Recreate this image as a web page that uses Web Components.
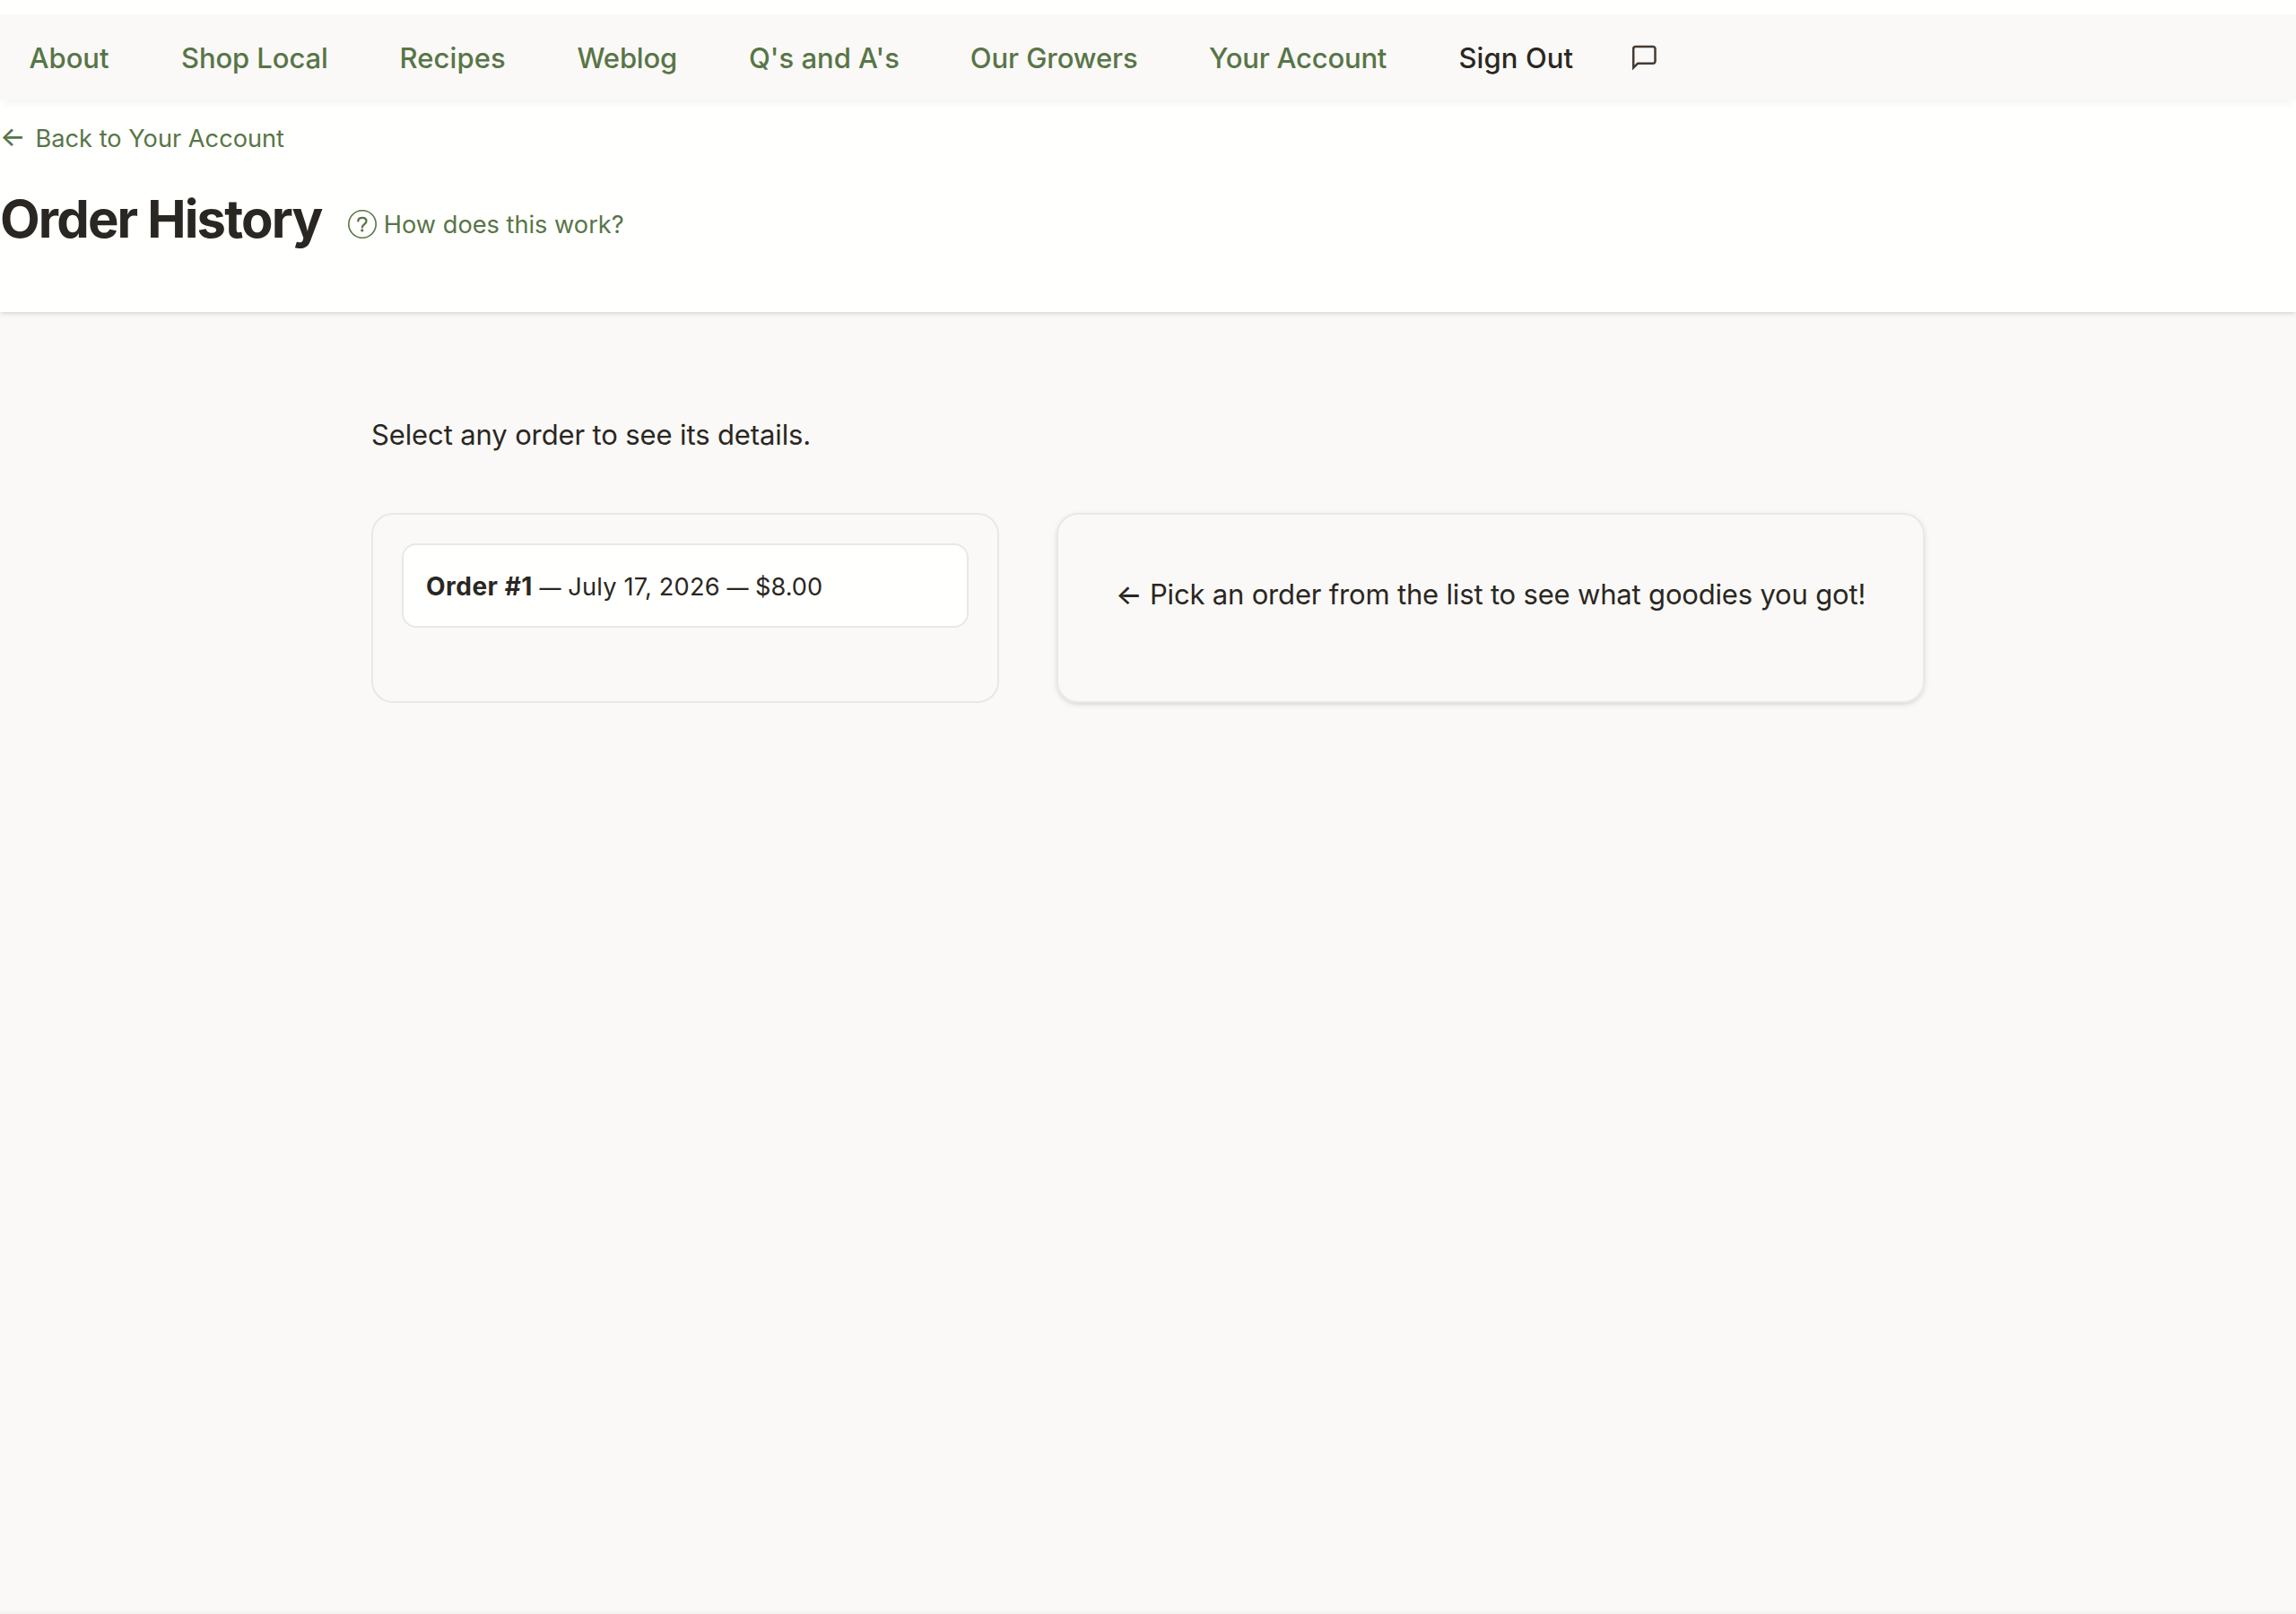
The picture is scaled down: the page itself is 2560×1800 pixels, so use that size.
<!DOCTYPE html>
<html lang="en">
<head>
<meta charset="utf-8">
<title>Order History</title>
<style>
:root{
    --green:#587547;
    --ink:#2a2722;
    --stone:#faf9f7;
    --line:#e9e8e2;
    --card-shadow:0 2px 6px rgba(0,0,0,0.1), 0 2px 4px -2px rgba(0,0,0,0.1);
}
body{
    margin:0;
    height:1800px;
    overflow:hidden;
    display:flex;
    flex-direction:column;
    background:#fffffe;
    color:var(--ink);
    font-family:Inter, "Noto Sans", sans-serif;
}
</style>
</head>
<body>

<market-nav>
    <nav-item style="width:89.5px">About</nav-item>
    <nav-item style="width:163.5px;letter-spacing:-0.1px">Shop Local</nav-item>
    <nav-item style="width:118px;letter-spacing:0.1px">Recipes</nav-item>
    <nav-item style="width:111.5px;letter-spacing:-0.18px">Weblog</nav-item>
    <nav-item style="width:166.8px">Q's and A's</nav-item>
    <nav-item style="width:186.2px;letter-spacing:-0.06px">Our Growers</nav-item>
    <nav-item style="width:198.5px;letter-spacing:-0.2px">Your Account</nav-item>
    <nav-item plain style="width:126px;letter-spacing:0.1px">Sign Out</nav-item>
    <chat-icon slot="icon"></chat-icon>
</market-nav>

<page-header>
    <span slot="back">Back to Your Account</span>
    <span slot="title">Order History</span>
    <help-link slot="help">How does this work?</help-link>
</page-header>

<order-browser>
    <span slot="intro">Select any order to see its details.</span>
    <order-row slot="list" number="1" date="July 17, 2026" total="$8.00"></order-row>
    <order-detail slot="detail">Pick an order from the list to see what goodies you got!</order-detail>
</order-browser>

<script>
const define = (name, html, setup) => {
    customElements.define(name, class extends HTMLElement {
        constructor(){
            super();
            this.attachShadow({mode:'open'});
            this.shadowRoot.innerHTML = html;
        }
        connectedCallback(){
            if(setup) setup(this, this.shadowRoot);
        }
    });
};

/*---- top navigation ----*/

define('market-nav', `
<style>
:host{
    display:block;
    margin-top:16px;
    position:relative;
    z-index:1;
    background:var(--stone);
    box-shadow:0 8px 8px -4px rgba(0,0,0,0.04);
}
nav{
    display:flex;
    align-items:center;
    gap:80px;
    height:96px;
    padding-left:32.5px;
}
.icon{
    display:flex;
    margin-left:-15px;
}
</style>
<nav><slot></slot><div class="icon"><slot name="icon"></slot></div></nav>`);

define('nav-item', `
<style>
:host{
    display:block;
    flex:none;
    padding-top:1px;
    font-size:31px;
    font-weight:500;
    line-height:48px;
    white-space:nowrap;
    color:var(--green);
}
:host([plain]){
    color:var(--ink);
}
a{ color:inherit; }
</style>
<a><slot></slot></a>`);

define('chat-icon', `
<style>
:host{ display:block; width:32px; height:32px; }
svg{ display:block; }
</style>
<svg width="32" height="32" viewBox="0 0 32 32" fill="none" stroke="#453b33" stroke-width="2.5" stroke-miterlimit="10">
    <path d="M4.2 27.6V6.4a2.5 2.5 0 0 1 2.5-2.5H26a2.5 2.5 0 0 1 2.5 2.5v13.9a2.5 2.5 0 0 1-2.5 2.5H9z"/>
</svg>`);

/*---- page heading ----*/

define('page-header', `
<style>
:host{
    display:block;
    flex:none;
    box-sizing:border-box;
    height:236px;
    padding-top:23px;
    background:#fffffd;
    position:relative;
    box-shadow:var(--card-shadow);
}
.back{
    display:flex;
    gap:12.5px;
    font-size:27.2px;
    line-height:40px;
    color:var(--green);
}
.arrow{
    width:27px;
    font-size:30px;
    font-weight:500;
    line-height:34px;
}
.heading{
    display:flex;
    align-items:flex-start;
    gap:29.5px;
    margin-top:33px;
}
h1{
    margin:0;
    font-size:58px;
    font-weight:700;
    line-height:73px;
    letter-spacing:-1.85px;
}
.help{ margin-top:22px; }
</style>
<div class="back"><span class="arrow">←</span><slot name="back"></slot></div>
<div class="heading">
    <h1><slot name="title"></slot></h1>
    <div class="help"><slot name="help"></slot></div>
</div>`);

define('help-link', `
<style>
:host{
    display:flex;
    align-items:center;
    gap:7.8px;
    font-size:27.2px;
    line-height:40px;
    color:var(--green);
}
span{ padding-top:1px; margin-bottom:-1px; }
</style>
<svg width="32" height="32" viewBox="0 0 32 32" fill="none" stroke="currentColor">
    <circle cx="16" cy="16" r="15.2" stroke-width="1.6"/>
    <path d="M11.3 12.6C11.3 10.2 13.2 8.9 15.9 8.9c2.7 0 4.6 1.5 4.6 3.7 0 1.8-1 2.7-2.4 3.6-1.5 1-2.2 1.8-2.2 3.4" stroke-width="2.3" stroke-linecap="round"/>
    <circle cx="15.8" cy="22.9" r="1.6" fill="currentColor" stroke="none"/>
</svg>
<span><slot></slot></span>`);

/*---- order list and detail ----*/

define('order-browser', `
<style>
:host{
    display:block;
    flex:1;
    padding-top:113px;
    background:var(--stone);
    box-shadow:inset 0 -6px 5px -5px rgba(0,0,0,0.05);
}
main{
    width:1732px;
    margin:0 auto;
}
p{
    margin:0 0 63px;
    font-size:31px;
    line-height:48px;
    letter-spacing:-0.125px;
}
.columns{
    display:grid;
    grid-template-columns:700px 968px;
    gap:64px;
    height:212px;
}
.list{
    border:2px solid var(--line);
    border-radius:24px;
    padding:32px;
}
</style>
<main>
    <p><slot name="intro"></slot></p>
    <div class="columns">
        <div class="list"><slot name="list"></slot></div>
        <slot name="detail"></slot>
    </div>
</main>`);

define('order-row', `
<style>
:host{
    display:block;
    box-sizing:border-box;
    height:94px;
    padding:26px 24px 0 25px;
    border:2px solid var(--line);
    border-radius:16px;
    background:#fffffe;
    font-size:27.2px;
    line-height:40px;
    white-space:nowrap;
}
b{
    font-size:28px;
    font-weight:700;
    letter-spacing:0.5px;
}
.dash{ font-size:24px; font-weight:500; }
.date{ letter-spacing:0.2px; }
</style>
<b></b> <span class="dash">—</span> <span class="date"></span> <span class="dash">—</span> <span class="total"></span>`,
(el, root) => {
    root.querySelector('b').textContent = 'Order #' + el.getAttribute('number');
    root.querySelector('.date').textContent = el.getAttribute('date');
    root.querySelector('.total').textContent = el.getAttribute('total');
});

define('order-detail', `
<style>
:host{
    display:block;
    box-sizing:border-box;
    padding:65px 64px 0;
    border:2px solid var(--line);
    border-radius:24px;
    box-shadow:var(--card-shadow);
    font-size:31px;
    line-height:48px;
    letter-spacing:-0.18px;
    white-space:nowrap;
}
.arrow{ font-weight:500; }
</style>
<span class="arrow">←</span> <slot></slot>`);
</script>
</body>
</html>
